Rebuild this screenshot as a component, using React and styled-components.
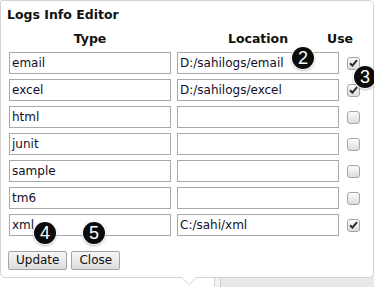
import React from 'react';
import styled, { createGlobalStyle } from 'styled-components';

const GlobalStyle = createGlobalStyle`
  html, body {
    margin: 0;
    padding: 0;
    background: #fff;
    overflow: hidden;
  }
  body {
    font-family: "DejaVu Sans", Verdana, sans-serif;
  }
`;

const Page = styled.div`
  width: 374px;
  height: 287px;
  position: relative;
`;

const Panel = styled.div`
  position: relative;
  box-sizing: border-box;
  width: 374px;
  height: 278px;
  background: #fff;
  border: 1px solid #d4d4d4;
  border-radius: 2px 5px 5px 5px;
  padding: 6px 0 0 6px;
  z-index: 2;

  &::before,
  &::after {
    content: '';
    position: absolute;
    left: 180px;
    width: 0;
    height: 0;
    border-left: 8px solid transparent;
    border-right: 8px solid transparent;
  }
  &::before {
    bottom: -8px;
    border-top: 8px solid #d4d4d4;
  }
  &::after {
    bottom: -7px;
    border-top: 8px solid #fff;
  }
`;

const Title = styled.div`
  font-size: 12.5px;
  font-weight: bold;
  color: #111;
  line-height: 16px;
  height: 18px;
`;

const Grid = styled.div`
  display: grid;
  grid-template-columns: 162px 162px 1fr;
  column-gap: 6px;
  row-gap: 5px;
  margin: 6px 0 0 2px;
  align-items: center;
`;

const Head = styled.div`
  font-size: 12.5px;
  font-weight: bold;
  color: #111;
  text-align: center;
  line-height: 16px;
  height: 18px;
  margin-bottom: -2px;
  ${(p) => p.$shift && `text-align: left; margin-left: ${p.$shift}px;`}
`;

const Field = styled.div`
  box-sizing: border-box;
  height: 22px;
  border: 1px solid #a9a9a9;
  padding: 0 2px;
  font-size: 12px;
  line-height: 20px;
  color: #10102a;
  white-space: nowrap;
  overflow: hidden;
`;

const Check = styled.span`
  display: flex;
  align-items: center;
  justify-content: center;
  box-sizing: border-box;
  width: 13px;
  height: 13px;
  margin-left: 2px;
  border: 1px solid #a6a6a6;
  border-radius: 3px;
  background: linear-gradient(#fcfcfc, #dcdcdc);
`;

const Buttons = styled.div`
  display: flex;
  gap: 4px;
  margin: 15px 0 0 1px;
`;

const Button = styled.button`
  box-sizing: border-box;
  height: 19px;
  padding: 0 7px;
  border: 1px solid #a3a3a3;
  border-radius: 2px;
  background: linear-gradient(#f6f6f6, #dddddd);
  font-family: "DejaVu Sans", Verdana, sans-serif;
  font-size: 12px;
  line-height: 17px;
  color: #111;
`;

const Badge = styled.div`
  position: absolute;
  left: ${(p) => p.$x - 11}px;
  top: ${(p) => p.$y - 11}px;
  width: 22px;
  height: 22px;
  border-radius: 50%;
  background: #0b0b0b;
  color: #fff;
  font-family: "Liberation Sans", Arial, sans-serif;
  font-size: 18px;
  line-height: 22px;
  text-align: center;
  box-shadow: 0 0 0 1px rgba(255, 255, 255, 0.9), 0 1px 3px rgba(0, 0, 0, 0.5);
  z-index: 5;
`;

const Backdrop = styled.div`
  position: absolute;
  left: 214px;
  right: 0;
  top: 270px;
  bottom: 0;
  display: flex;
  z-index: 1;
`;

const Gutter = styled.div`
  width: 5px;
  background: #f2f2f2;
  border-left: 1px solid #cfcfcf;
  border-right: 1px solid #cfcfcf;
`;

const Fill = styled.div`
  flex: 1;
  background: #e8e8e8;
`;

const rows = [
  { type: 'email', loc: 'D:/sahilogs/email', use: true },
  { type: 'excel', loc: 'D:/sahilogs/excel', use: true },
  { type: 'html', loc: '', use: false },
  { type: 'junit', loc: '', use: false },
  { type: 'sample', loc: '', use: false },
  { type: 'tm6', loc: '', use: false },
  { type: 'xml', loc: 'C:/sahi/xml', use: true },
];

const Tick = () => (
  <svg width="9" height="8" viewBox="0 0 9 8">
    <path d="M1 4.2 L3.4 6.6 L8 1.2" fill="none" stroke="#2a2a2a" strokeWidth="2" />
  </svg>
);

export default function App() {
  return (
    <Page>
      <GlobalStyle />
      <Panel>
        <Title>Logs Info Editor</Title>
        <Grid>
          <Head>Type</Head>
          <Head>Location</Head>
          <Head $shift={-18}>Use</Head>
          {rows.map((r) => (
            <React.Fragment key={r.type}>
              <Field>{r.type}</Field>
              <Field>{r.loc}</Field>
              <Check>{r.use && <Tick />}</Check>
            </React.Fragment>
          ))}
        </Grid>
        <Buttons>
          <Button>Update</Button>
          <Button>Close</Button>
        </Buttons>
      </Panel>
      <Backdrop>
        <Gutter />
        <Fill />
      </Backdrop>
      <Badge $x={303} $y={58}>2</Badge>
      <Badge $x={365} $y={77}>3</Badge>
      <Badge $x={45} $y={233}>4</Badge>
      <Badge $x={94} $y={233}>5</Badge>
    </Page>
  );
}
